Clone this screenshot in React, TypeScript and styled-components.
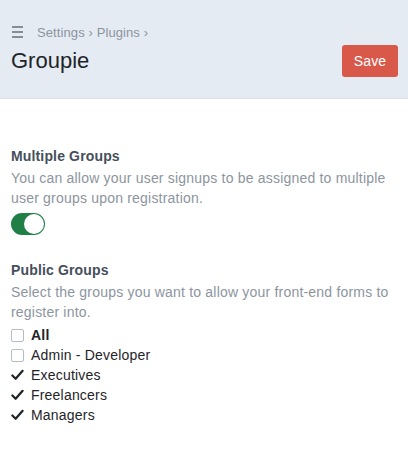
import React from "react";
import styled, { createGlobalStyle } from "styled-components";

const Global = createGlobalStyle`
  html, body { margin: 0; padding: 0; background: #ffffff; }
  body { font-family: "Liberation Sans", Arial, sans-serif; -webkit-font-smoothing: antialiased; }
  * { box-sizing: border-box; }
`;

const Header = styled.header`
  background: #e5ebf2;
  border-bottom: 1px solid #d9dfe6;
  height: 99px;
  padding: 24px 10px 0 11px;
  display: flex;
  align-items: flex-start;
  justify-content: space-between;
`;

const TitleBlock = styled.div`
  display: flex;
  flex-direction: column;
`;

const Crumbs = styled.div`
  display: flex;
  align-items: center;
  gap: 14px;
  height: 16px;
  color: #8c959e;
  font-size: 13px;
  letter-spacing: 0.1px;
`;

const Burger = styled.span`
  display: flex;
  flex-direction: column;
  gap: 3px;
  width: 11px;
  margin-left: 1px;
  & > i { display: block; height: 2px; background: #858e97; }
`;

const Title = styled.h1`
  margin: 8px 0 0;
  font-size: 22px;
  font-weight: 400;
  color: #1f2428;
  line-height: 26px;
`;

const SaveButton = styled.button`
  margin-top: 21px;
  width: 56px;
  height: 32px;
  border: none;
  border-radius: 3px;
  background: #d8584a;
  color: #ffffff;
  font-family: inherit;
  font-size: 14px;
  letter-spacing: 0.2px;
  padding: 0;
`;

const Main = styled.main`
  padding: 47px 11px 0;
  display: flex;
  flex-direction: column;
`;

const Field = styled.section`
  display: flex;
  flex-direction: column;
  margin-bottom: 25px;
`;

const Label = styled.div`
  font-size: 14px;
  font-weight: 700;
  color: #454f5b;
  line-height: 20px;
  letter-spacing: 0.15px;
`;

const Help = styled.div`
  font-size: 14px;
  color: #8c959e;
  line-height: 20px;
  letter-spacing: 0.2px;
  margin-top: 2px;
`;

const Toggle = styled.span<{ on: boolean }>`
  margin-top: 5px;
  width: 34px;
  height: 22px;
  border-radius: 11px;
  background: ${(p) => (p.on ? "#1f7f45" : "#c4cdd5")};
  display: flex;
  align-items: center;
  justify-content: ${(p) => (p.on ? "flex-end" : "flex-start")};
  padding: 1px;
  & > i {
    display: block;
    width: 20px;
    height: 20px;
    border-radius: 50%;
    background: #ffffff;
  }
`;

const List = styled.div`
  display: flex;
  flex-direction: column;
  margin-top: 3px;
`;

const Row = styled.label`
  display: flex;
  align-items: center;
  gap: 7px;
  height: 20px;
  font-size: 14px;
  color: #1f2428;
  letter-spacing: 0.2px;
`;

const Box = styled.span<{ checked: boolean }>`
  width: 13px;
  height: 13px;
  border: ${(p) => (p.checked ? "none" : "1px solid #b5bcc3")};
  border-radius: 2px;
  background: #ffffff;
  display: flex;
  align-items: center;
  justify-content: center;
`;

const Name = styled.span<{ bold?: boolean }>`
  font-weight: ${(p) => (p.bold ? 700 : 400)};
`;

const Check = () => (
  <svg width="14" height="12" viewBox="0 0 14 12">
    <path d="M1.5 6.5 L5 10 L12.5 1.5" fill="none" stroke="#1f2428" strokeWidth="2.4" strokeLinecap="round" strokeLinejoin="round" />
  </svg>
);

const groups = [
  { name: "All", checked: false, bold: true },
  { name: "Admin - Developer", checked: false },
  { name: "Executives", checked: true },
  { name: "Freelancers", checked: true },
  { name: "Managers", checked: true },
];

export default function App() {
  return (
    <>
      <Global />
      <Header>
        <TitleBlock>
          <Crumbs>
            <Burger><i /><i /><i /></Burger>
            <span>Settings › Plugins ›</span>
          </Crumbs>
          <Title>Groupie</Title>
        </TitleBlock>
        <SaveButton>Save</SaveButton>
      </Header>
      <Main>
        <Field>
          <Label>Multiple Groups</Label>
          <Help>You can allow your user signups to be assigned to multiple user groups upon registration.</Help>
          <Toggle on={true}><i /></Toggle>
        </Field>
        <Field>
          <Label>Public Groups</Label>
          <Help>Select the groups you want to allow your front-end forms to register into.</Help>
          <List>
            {groups.map((g) => (
              <Row key={g.name}>
                <Box checked={g.checked}>{g.checked && <Check />}</Box>
                <Name bold={g.bold}>{g.name}</Name>
              </Row>
            ))}
          </List>
        </Field>
      </Main>
    </>
  );
}
